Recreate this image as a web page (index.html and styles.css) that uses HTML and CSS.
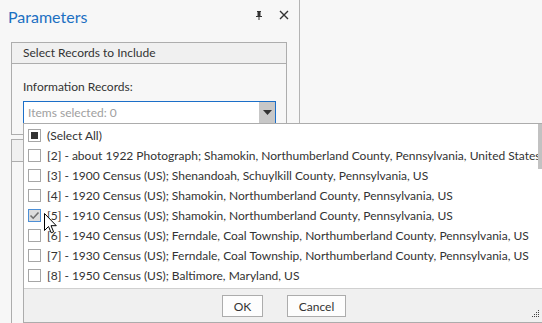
FILE: index.html
```html
<!DOCTYPE html>
<html>
<head>
<meta charset="utf-8">
<link rel="stylesheet" href="styles.css">
</head>
<body>
<div class="pane">
  <div class="pane-head">
    <span class="title">Parameters</span>
    <span class="pane-icons">
      <svg class="pin" width="8" height="9" viewBox="0 0 8 9"><path d="M2 0h4v1H5.5v4H7v1H4.5v3h-1V6H1V5h1.5V1H2z" fill="#333"/><rect x="3" y="1" width="2" height="4" fill="#333"/></svg>
      <svg class="close" width="10" height="10" viewBox="0 0 10 10"><path d="M1 1L9 9M9 1L1 9" stroke="#333" stroke-width="1.4"/></svg>
    </span>
  </div>
  <div class="group">
    <div class="group-head">Select Records to Include</div>
    <div class="group-body">
      <div class="label">Information Records:</div>
      <div class="combo">
        <span class="placeholder">Items selected: 0</span>
        <span class="combo-btn"><svg width="9" height="5" viewBox="0 0 9 5"><path d="M0 0h9L4.5 5z" fill="#333"/></svg></span>
      </div>
    </div>
  </div>
  <div class="group group2">
    <div class="group-head">&nbsp;</div>
  </div>
</div>

<div class="popup">
  <div class="list">
    <div class="row"><span class="cb cb-partial"></span>(Select All)</div>
    <div class="row"><span class="cb"></span>[2] - about 1922 Photograph; Shamokin, Northumberland County, Pennsylvania, United States</div>
    <div class="row"><span class="cb"></span>[3] - 1900 Census (US); Shenandoah, Schuylkill County, Pennsylvania, US</div>
    <div class="row"><span class="cb"></span>[4] - 1920 Census (US); Shamokin, Northumberland County, Pennsylvania, US</div>
    <div class="row"><span class="cb cb-checked"><svg width="11" height="9" viewBox="0 0 11 9"><path d="M1.5 4.5L4.2 7.2L9.5 1.5" fill="none" stroke="#6e6e6e" stroke-width="1.6"/></svg></span>[5] - 1910 Census (US); Shamokin, Northumberland County, Pennsylvania, US</div>
    <div class="row"><span class="cb"></span>[6] - 1940 Census (US); Ferndale, Coal Township, Northumberland County, Pennsylvania, US</div>
    <div class="row"><span class="cb"></span>[7] - 1930 Census (US); Ferndale, Coal Township, Northumberland County, Pennsylvania, US</div>
    <div class="row"><span class="cb"></span>[8] - 1950 Census (US); Baltimore, Maryland, US</div>
  </div>
  <div class="scroll-thumb"></div>
  <div class="footer">
    <button class="btn btn-ok">OK</button>
    <button class="btn btn-cancel">Cancel</button>
    <svg class="grip" width="8" height="8" viewBox="0 0 8 8" fill="#444"><rect x="6" y="0" width="1" height="1"/><rect x="4" y="2" width="1" height="1"/><rect x="6" y="2" width="1" height="1"/><rect x="2" y="4" width="1" height="1"/><rect x="4" y="4" width="1" height="1"/><rect x="6" y="4" width="1" height="1"/><rect x="0" y="6" width="1" height="1"/><rect x="2" y="6" width="1" height="1"/><rect x="4" y="6" width="1" height="1"/><rect x="6" y="6" width="1" height="1"/></svg>
  </div>
</div>

<svg class="cursor" width="13" height="21" viewBox="0 0 13 21"><path d="M0.5 0.5V17.5L4.5 13.5L7.2 19.8L9.6 18.8L7 12.7H12.3Z" fill="#fff" stroke="#000" stroke-width="1"/></svg>
</body>
</html>
```
FILE: styles.css
```css
html, body {
  margin: 0;
  padding: 0;
}
body {
  background: #f7f7f7;
  width: 542px;
  height: 323px;
  overflow: hidden;
  position: relative;
  font-family: Lato, "Open Sans", sans-serif;
  font-size: 12px;
  color: #333;
}
.pane {
  height: 323px;
  border-right: 1px solid #b4b4b4;
  box-sizing: border-box;
  width: 300px;
}
.pane-head {
  height: 30px;
  display: flex;
  align-items: center;
  justify-content: space-between;
  padding-left: 8px;
  padding-right: 10px;
}
.title {
  font-size: 16px;
  color: #1c70c2;
  position: relative;
  top: 1px;
}
.pane-icons {
  display: flex;
  align-items: center;
  gap: 16px;
}
.group {
  margin-left: 11px;
  margin-top: 12px;
  width: 276px;
  box-sizing: border-box;
  border: 1px solid #adadad;
  height: 93px;
}
.group-head {
  height: 21px;
  background: #f0f0f0;
  border-bottom: 1px solid #adadad;
  box-sizing: border-box;
  line-height: 20px;
  padding-left: 11px;
}
.group-body {
  padding: 15px 0 0 11px;
}
.label {
  line-height: 16px;
  height: 16px;
}
.combo {
  margin-top: 6px;
  width: 253px;
  height: 23px;
  box-sizing: border-box;
  border: 1px solid #1c6fc8;
  background: #fff;
  display: flex;
  align-items: stretch;
  justify-content: space-between;
}
.placeholder {
  color: #a0a0a0;
  padding-left: 4px;
  line-height: 21px;
}
.combo-btn {
  width: 16px;
  background: #c7c7c7;
  display: flex;
  align-items: center;
  justify-content: center;
}
.group2 {
  margin-top: 4px;
  height: 200px;
}
.group2 .group-head {
  height: 22px;
}
.popup {
  position: absolute;
  left: 23px;
  top: 123px;
  width: 540px;
  height: 200px;
  box-sizing: border-box;
  border: 1px solid #acacac;
  background: #fff;
  display: flex;
  flex-direction: column;
}
.list {
  flex: 1;
  padding-top: 1px;
}
.row {
  height: 20px;
  display: flex;
  align-items: center;
  white-space: nowrap;
  padding-left: 4px;
}
.cb {
  width: 13px;
  height: 13px;
  box-sizing: border-box;
  border: 1px solid #a6a6a6;
  background: #fff;
  margin-right: 6px;
  flex: none;
  display: flex;
  align-items: center;
  justify-content: center;
}
.cb-partial::after {
  content: "";
  width: 7px;
  height: 7px;
  background: #333;
}
.cb-checked {
  border-color: #4d8fd6;
  background: #dcdcdc;
}
.scroll-thumb {
  position: absolute;
  left: 514px;
  top: 0;
  width: 6px;
  height: 45px;
  background: #c2c2c2;
}
.footer {
  height: 34px;
  background: #f0f0f0;
  border-top: 1px solid #d0d0d0;
  box-sizing: border-box;
  display: flex;
  align-items: center;
  padding-left: 198px;
  gap: 24px;
  position: relative;
}
.btn {
  font-family: inherit;
  font-size: 12px;
  color: #333;
  background: #fdfdfd;
  border: 1px solid #acacac;
  height: 22px;
  padding: 0;
  margin-top: 1px;
}
.btn-ok { width: 41px; }
.btn-cancel { width: 59px; }
.grip {
  position: absolute;
  left: 508px;
  bottom: 4px;
}
.cursor {
  position: absolute;
  left: 44px;
  top: 213px;
}
```
